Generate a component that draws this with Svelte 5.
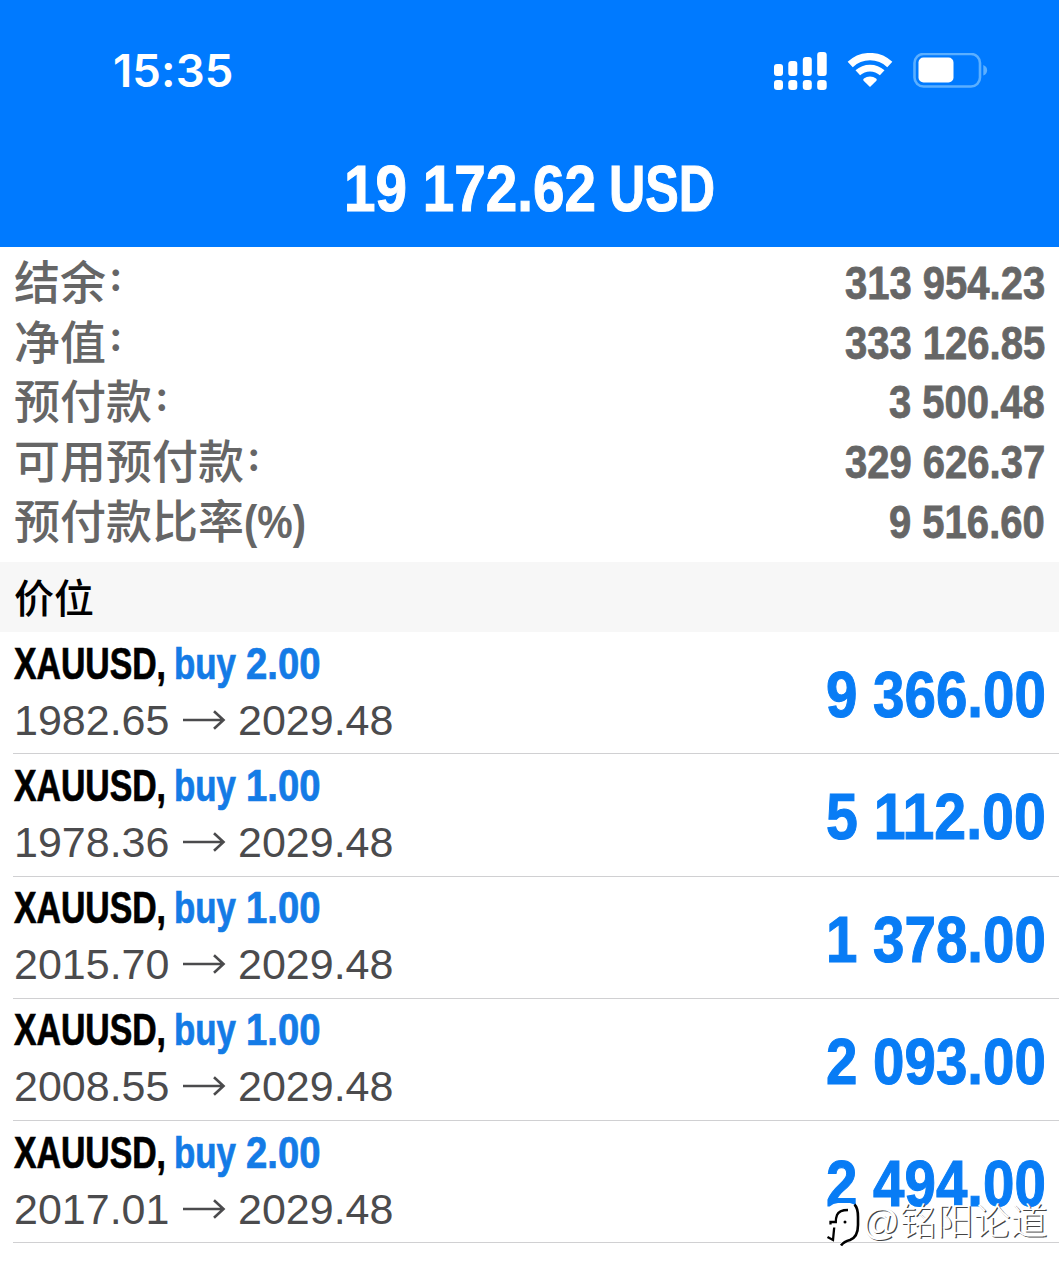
<script lang="ts">
  const summary = [
    { label: "结余", suffix: "：", value: "313 954.23" },
    { label: "净值", suffix: "：", value: "333 126.85" },
    { label: "预付款", suffix: "：", value: "3 500.48" },
    { label: "可用预付款", suffix: "：", value: "329 626.37" },
    { label: "预付款比率", suffix: "(%)", value: "9 516.60" },
  ];

  const positions = [
    { symbol: "XAUUSD,", side: "buy", volume: "2.00", open: "1982.65", price: "2029.48", profit: "9 366.00" },
    { symbol: "XAUUSD,", side: "buy", volume: "1.00", open: "1978.36", price: "2029.48", profit: "5 112.00" },
    { symbol: "XAUUSD,", side: "buy", volume: "1.00", open: "2015.70", price: "2029.48", profit: "1 378.00" },
    { symbol: "XAUUSD,", side: "buy", volume: "1.00", open: "2008.55", price: "2029.48", profit: "2 093.00" },
    { symbol: "XAUUSD,", side: "buy", volume: "2.00", open: "2017.01", price: "2029.48", profit: "2 494.00" },
  ];

  // spaces and dots are half as wide as a digit
  function numWidth(text: string, digit: number) {
    let w = 0;
    for (const c of text) w += c === " " || c === "." ? digit / 2 : digit;
    return w;
  }
</script>

{#snippet condensed(text: string, width: number, size: number)}
  <svg class="condensed" {width} height={size}>
    <text x="0" y={size * 0.86} font-size={size} stroke-width={size / 60} textLength={width} lengthAdjust="spacingAndGlyphs">{text}</text>
  </svg>
{/snippet}

<div class="screen">
  <header>
    <div class="status">
      <span class="time">15:35</span>
      <div class="icons">
        <svg width="54" height="39" viewBox="0 0 54 39" fill="#fff">
          <rect x="0" y="12" width="9" height="12" rx="3" />
          <rect x="14.3" y="9" width="9" height="15" rx="3" />
          <rect x="28.8" y="5" width="9" height="19" rx="3" />
          <rect x="43.2" y="0" width="9.5" height="24" rx="3" />
          <rect x="0" y="28" width="9" height="10" rx="3.2" />
          <rect x="14.3" y="28" width="9" height="10" rx="3.2" />
          <rect x="28.8" y="28" width="9" height="10" rx="3.2" />
          <rect x="43.2" y="28" width="9.5" height="10" rx="3.2" />
        </svg>
        <svg class="wifi" width="46" height="36" viewBox="0 0 46 36">
          <path d="M3.2 11.5a28.8 28.8 0 0 1 39.6 0" fill="none" stroke="#fff" stroke-width="7.4" />
          <path d="M10.8 19.8a18 18 0 0 1 24.4 0" fill="none" stroke="#fff" stroke-width="6.8" />
          <path d="M23 34 16.6 27.7q-1-1 .3-2.100a9.500 9.500 0 0 1 12.200 0q1.300 1.100.3 2.100z" fill="#fff" />
        </svg>
        <svg class="battery" width="75" height="36" viewBox="0 0 75 36">
          <rect x="1.5" y="1" width="65.5" height="32.5" rx="9" fill="none" stroke="#5bafff" stroke-width="2.6" />
          <rect x="5.5" y="4.5" width="35" height="25" rx="5" fill="#fff" />
          <path d="M70.3 12q3.8 1.5 3.8 5.3t-3.8 5.3z" fill="#5bafff" />
        </svg>
      </div>
    </div>
    <h1>
      {@render condensed("19 172.62", 252, 65)}
      {@render condensed("USD", 106, 65)}
    </h1>
  </header>

  <section class="summary">
    {#each summary as row}
      <div class="row">
        <div class="label">
          <span>{row.label}</span>
          {#if row.suffix === "："}
            <span class="colon">{row.suffix}</span>
          {:else}
            {@render condensed(row.suffix, 62, 46)}
          {/if}
        </div>
        {@render condensed(row.value, numWidth(row.value, 22.25), 46)}
      </div>
    {/each}
  </section>

  <h2>价位</h2>

  <ul>
    {#each positions as p}
      <li>
        <div class="deal">
          <div class="name">
            {@render condensed(p.symbol, 152, 43.5)}
            <span class="side">
              {@render condensed(p.side, 62, 43.5)}
              {@render condensed(p.volume, 74.5, 43.5)}
            </span>
          </div>
          <div class="prices">
            <span>{p.open}</span>
            <svg width="43" height="20" viewBox="0 0 43 20" fill="none" stroke="#4b4b4d" stroke-width="2.6">
              <path d="M0 10H40.5M31 1.2 40.5 10 31 18.8" />
            </svg>
            <span>{p.price}</span>
          </div>
        </div>
        <div class="profit">{@render condensed(p.profit, numWidth(p.profit, 31.4), 65)}</div>
      </li>
    {/each}
  </ul>

  <div class="watermark">
    <svg width="36" height="46" viewBox="0 0 36 46">
      <path d="M0 36V12Q2 2 12 1h12q8 1 9 12v14q-1 9-10 11l-8 4v-3z" fill="#fff" />
      <path d="M28.5 2.5Q32 6 32 15v8q0 12-8 15-6 1.500-9 5.500" fill="none" stroke="#000" stroke-width="2.600" />
      <path d="M22 8Q13 8 11 13q-1.200 3-1.200 7H4.500v2.500M8.200 25.500 7 38l-5.500-3" fill="none" stroke="#000" stroke-width="2.300" />
      <circle cx="19" cy="20" r="1.5" />
    </svg>
    <span class="at">@</span>
    <span>铭阳论道</span>
  </div>
</div>

<style>
  :global(body) { margin: 0; background: #fff; }
  .screen { position: relative; width: 1059px; height: 1280px; overflow: hidden; background: #fff; font-family: "Liberation Sans", "Noto Sans CJK SC", sans-serif; }
  .condensed { display: block; flex: none; overflow: visible; font-family: "Liberation Sans", sans-serif; font-weight: 700; fill: currentColor; stroke: currentColor; }

  header { height: 247px; background: #007aff; color: #fff; }
  .status { height: 142px; box-sizing: border-box; padding: 0 71px 0 113px; display: flex; justify-content: space-between; align-items: center; }
  .time { font: 600 45.5px/50px Inter, sans-serif; letter-spacing: 0.1px; }
  .icons { display: flex; align-items: center; }
  .wifi { margin-left: 19px; }
  .battery { margin-left: 20px; }
  h1 { margin: 0; padding-top: 13px; display: flex; justify-content: center; gap: 13px; }

  .summary { height: 315px; box-sizing: border-box; padding: 5px 14px 0; color: #666; }
  .row { height: 59.75px; display: flex; justify-content: space-between; align-items: center; }
  .label { display: flex; align-items: center; height: 60px; font: 500 46px/52px "Noto Sans CJK SC", sans-serif; }
  .label span { padding-bottom: 6px; }
  .label .colon { padding: 0 0 9px 2px; font-size: 31px; line-height: 46px; font-weight: 900; }
  .label .condensed { stroke: none; }

  h2 { margin: 0; height: 70px; box-sizing: border-box; padding-left: 14px; background: #f7f7f7; font: 500 40px/69px "Noto Sans CJK SC", sans-serif; color: #000; }

  ul { margin: 0; padding: 0 0 0 13px; list-style: none; }
  li { height: 122.3px; box-sizing: border-box; padding-right: 13.5px; display: flex; justify-content: space-between; border-bottom: 1.5px solid #d0d0d2; }
  .name { display: flex; gap: 8px; padding: 9.5px 0 0 1px; color: #000; }
  .side { display: flex; gap: 10px; color: #147be6; }
  .prices { display: flex; align-items: center; height: 50px; padding: 9.5px 0 0 1px; font-size: 43px; line-height: 50px; color: #4b4b4d; }
  .prices span { width: 155px; }
  .prices svg { margin: 0 12px 0 14px; }
  .profit { padding-top: 29px; color: #087cf5; }

  .watermark { position: absolute; left: 826px; top: 1199px; display: flex; align-items: center; color: #fff; font: 300 37px/40px "Noto Sans CJK SC", sans-serif; text-shadow: 1.2px 1.2px 0.5px #444; }
  .watermark span { padding-bottom: 12px; }
  .watermark .at { padding-bottom: 4px; font: 37px/40px "Liberation Sans", sans-serif; }
</style>
